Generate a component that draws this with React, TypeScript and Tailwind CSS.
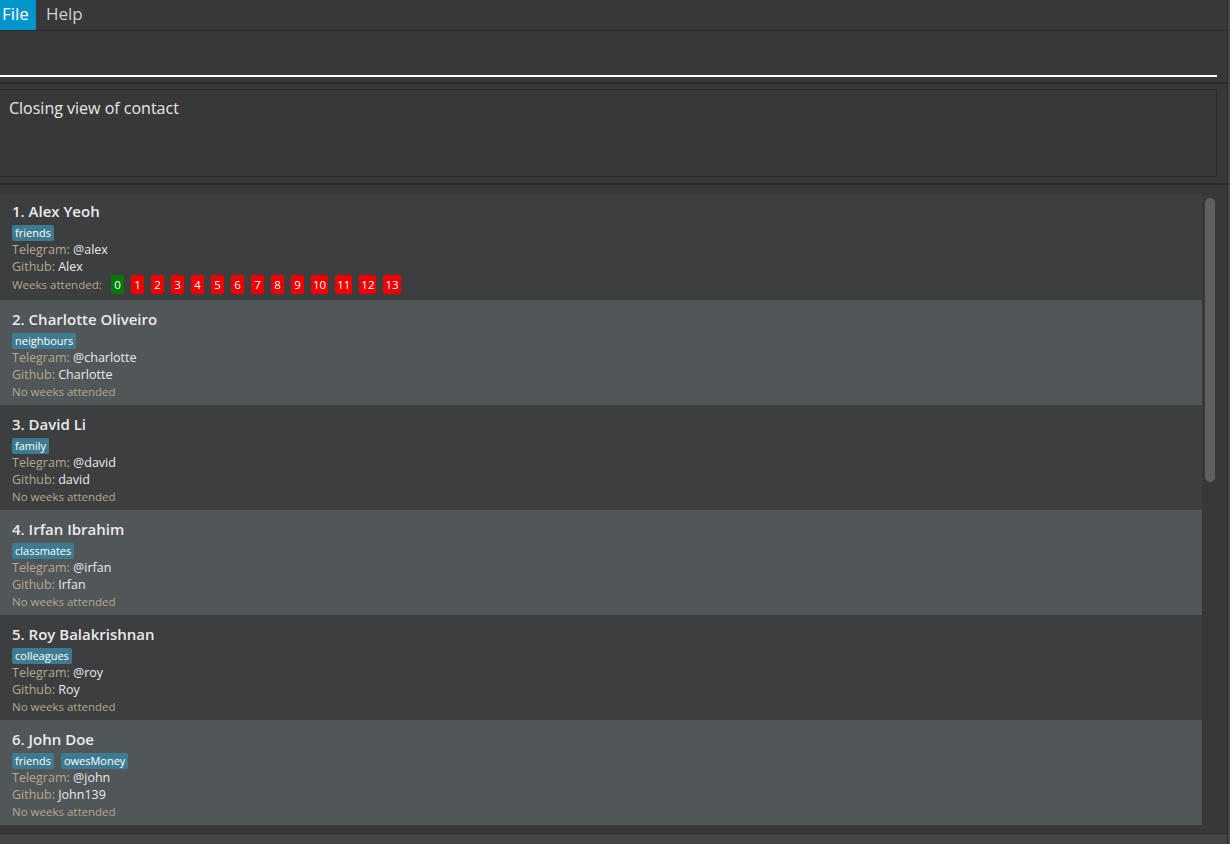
import React from 'react';

type Person = {
  name: string;
  tags: string[];
  telegram: string;
  github: string;
  weeks?: number[];
};

const PEOPLE: Person[] = [
  { name: 'Alex Yeoh', tags: ['friends'], telegram: '@alex', github: 'Alex', weeks: [0, 1, 2, 3, 4, 5, 6, 7, 8, 9, 10, 11, 12, 13] },
  { name: 'Charlotte Oliveiro', tags: ['neighbours'], telegram: '@charlotte', github: 'Charlotte' },
  { name: 'David Li', tags: ['family'], telegram: '@david', github: 'david' },
  { name: 'Irfan Ibrahim', tags: ['classmates'], telegram: '@irfan', github: 'Irfan' },
  { name: 'Roy Balakrishnan', tags: ['colleagues'], telegram: '@roy', github: 'Roy' },
  { name: 'John Doe', tags: ['friends', 'owesMoney'], telegram: '@john', github: 'John139' },
];

function Card({ p, index }: { p: Person; index: number }) {
  const even = index % 2 === 1;
  const hasWeeks = !!p.weeks;
  return (
    <div
      className={`pl-[12px] ${even ? 'bg-[#515658]' : 'bg-[#3c3e3f]'} ${
        hasWeeks ? 'pt-[6px] pb-[6px]' : 'pt-[8px] pb-[5px]'
      }`}
    >
      <div className="text-[15px] leading-[22px] font-semibold text-[#ebebeb]">
        {index + 1}. {p.name}
      </div>
      <div className="flex gap-[7px] mt-[3px]">
        {p.tags.map((t) => (
          <span key={t} className="h-[16px] px-[3px] rounded-[2px] bg-[#3e7b91] text-white text-[11px] leading-[16px]">
            {t}
          </span>
        ))}
      </div>
      <div className="text-[12.5px] leading-[17px]">
        <span className="text-[#b5a98f]">Telegram:</span> <span className="text-[#ebebeb]">{p.telegram}</span>
      </div>
      <div className="text-[12.5px] leading-[17px]">
        <span className="text-[#b5a98f]">Github:</span> <span className="text-[#ebebeb]">{p.github}</span>
      </div>
      {hasWeeks ? (
        <div className="flex items-center h-[19px]">
          <span className="text-[11.5px] text-[#b5a98f] w-[99px]">Weeks attended:</span>
          <div className="flex gap-[7px]">
            {p.weeks!.map((w) => (
              <span
                key={w}
                className={`h-[19px] min-w-[13px] px-[2px] rounded-[2px] text-white text-[11.5px] leading-[19px] text-center ${
                  w === 0 ? 'bg-[#007a00]' : 'bg-[#ee0000]'
                }`}
              >
                {w}
              </span>
            ))}
          </div>
        </div>
      ) : (
        <div className="text-[11.5px] leading-[17px] text-[#b5a98f]">No weeks attended</div>
      )}
    </div>
  );
}

export default function App() {
  return (
    <div
      className="w-[1230px] h-[844px] bg-[#383838] flex overflow-hidden"
      style={{ fontFamily: '"Open Sans", "Noto Sans", sans-serif' }}
    >
      <div className="w-[1227px] flex flex-col">
        {/* Menu bar */}
        <div className="h-[31px] flex items-stretch text-[17px] border-b border-[#2a2a2a]">
          <div className="w-[36px] bg-[#0096c9] text-white pl-[2px] leading-[28px]">File</div>
          <div className="px-[10px] text-[#cfcfcf] leading-[28px]">Help</div>
        </div>

        {/* Command box */}
        <div className="h-[51px] pr-[10px] flex flex-col justify-end pb-[5px]">
          <div className="h-[2px] bg-white"></div>
        </div>
        <div className="h-[2px] bg-[#2b2b2b]"></div>

        {/* Result box */}
        <div className="h-[99px] pt-[5px] pr-[10px] pb-[6px]">
          <div className="h-full border border-l-0 border-[#2b2b2b] pl-[9px] pt-[6px] text-[16px] text-[#e8e8e8]">
            Closing view of contact
          </div>
        </div>
        <div className="h-[2px] bg-[#2b2b2b]"></div>

        {/* List */}
        <div className="flex-1 flex pt-[9px] min-h-0">
          <div className="w-[1202px] flex flex-col">
            {PEOPLE.map((p, i) => (
              <Card key={p.name} p={p} index={i} />
            ))}
          </div>
          <div className="flex-1 relative">
            <div className="absolute left-[3px] top-[4px] w-[10px] h-[284px] rounded-[5px] bg-[#5f5f5f]"></div>
          </div>
        </div>

        {/* Status bar */}
        <div className="h-[11px] border-t border-[#2a2a2a] bg-[#444444]"></div>
      </div>
      <div className="w-[3px] flex">
        <div className="w-[1px] bg-[#2b2b2b]"></div>
        <div className="w-[2px] bg-[#4a4a4a]"></div>
      </div>
    </div>
  );
}
